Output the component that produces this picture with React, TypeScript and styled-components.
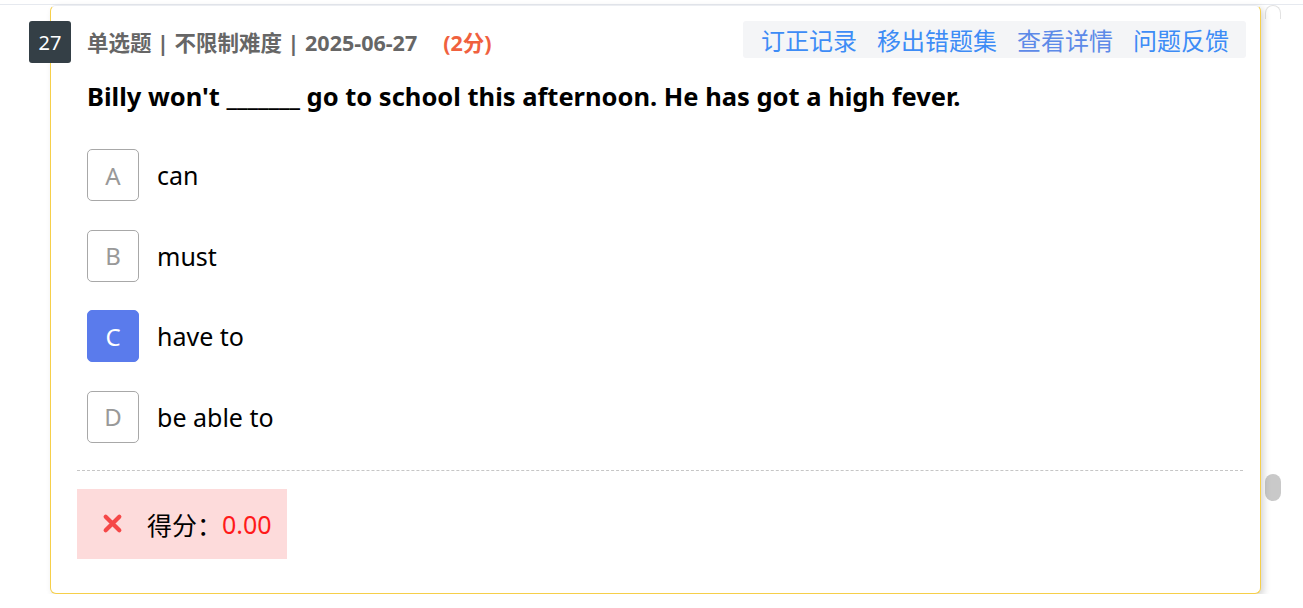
import styled, { createGlobalStyle } from "styled-components";

const GlobalStyle = createGlobalStyle`
  body {
    margin: 0;
    background: #fff;
    font-family: "Noto Sans", "Noto Sans CJK SC", sans-serif;
  }
`;

const TopEdge = styled.div`
  height: 4px;
  border-bottom: 1px solid #e6e9ef;
`;

const Page = styled.div`
  display: flex;
  flex-direction: row;
  align-items: flex-start;
  gap: 4px;
  padding-left: 50px;
`;

const Card = styled.div`
  position: relative;
  box-sizing: border-box;
  width: 1211px;
  height: 589px;
  border: 1px solid #f6cf4a;
  border-top-color: #eceef2;
  border-radius: 6px;
  box-shadow: 3px 3px 7px rgba(0, 0, 0, 0.16);
  background: #fff;
  padding-top: 15px;
`;

const Badge = styled.div`
  position: absolute;
  left: -22px;
  top: 15px;
  width: 42px;
  height: 42px;
  border-radius: 3px;
  background: #343f46;
  color: #fff;
  font-size: 20px;
  display: flex;
  align-items: center;
  justify-content: center;
`;

const Body = styled.div`
  padding: 0 14px 0 36px;
`;

const HeaderRow = styled.div`
  display: flex;
  align-items: center;
  justify-content: space-between;
  height: 37px;
`;

const Meta = styled.div`
  font-size: 21.5px;
  font-weight: 700;
  color: #666;
  white-space: pre;
  padding-top: 4px;
`;

const Score = styled.span`
  color: #f0613e;
  margin-left: 26px;
`;

const Links = styled.div`
  display: flex;
  gap: 20px;
  height: 37px;
  align-items: center;
  padding: 0 17px 0 18px;
  background: #f4f5f7;
  border-radius: 3px;
`;

const LinkItem = styled.span<{ $muted?: boolean }>`
  font-size: 24px;
  color: ${(p) => (p.$muted ? "#5d8ae8" : "#3d8cf6")};
  cursor: pointer;
`;

const Question = styled.div`
  margin-top: 21px;
  font-size: 25.5px;
  line-height: 34px;
  font-weight: 700;
  color: #000;
`;

const Options = styled.div`
  display: flex;
  flex-direction: column;
  gap: 28.5px;
  margin-top: 36px;
`;

const OptionRow = styled.div`
  display: flex;
  align-items: center;
  gap: 18px;
`;

const OptionKey = styled.div<{ $selected?: boolean }>`
  box-sizing: border-box;
  width: 52px;
  height: 52px;
  border-radius: 5px;
  border: 1px solid ${(p) => (p.$selected ? "#5a7bec" : "#a8a8a8")};
  background: ${(p) => (p.$selected ? "#5a7bec" : "#fff")};
  color: ${(p) => (p.$selected ? "#fff" : "#999")};
  font-size: 24px;
  display: flex;
  align-items: center;
  justify-content: center;
`;

const OptionText = styled.span`
  font-size: 25px;
  color: #000;
`;

const Footer = styled.div`
  padding: 0 17px 0 26px;
  margin-top: 27px;
`;

const Divider = styled.div`
  border-top: 1px dashed #c6c6c6;
`;

const Result = styled.div`
  margin-top: 18px;
  width: 210px;
  height: 70px;
  background: #fddbdb;
  display: flex;
  align-items: center;
  padding-left: 25px;
  box-sizing: border-box;
  font-size: 25px;
  color: #000;
`;

const Cross = styled.svg`
  width: 21px;
  height: 21px;
  margin-right: 24px;
`;

const Zero = styled.span`
  color: #ff1a1a;
`;

const Track = styled.div`
  width: 16px;
  height: 589px;
  display: flex;
  flex-direction: column;
  align-items: center;
`;

const TrackCap = styled.div`
  box-sizing: border-box;
  width: 16px;
  height: 14px;
  border: 1px solid #e2e2e2;
  border-bottom: none;
  border-radius: 8px 8px 0 0;
`;

const Thumb = styled.div`
  margin-top: 455px;
  width: 16px;
  height: 27px;
  border-radius: 8px;
  background: #c9c9c9;
`;

const options = [
  { key: "A", text: "can" },
  { key: "B", text: "must" },
  { key: "C", text: "have to", selected: true },
  { key: "D", text: "be able to" },
];

export default function App() {
  return (
    <>
      <GlobalStyle />
      <TopEdge />
      <Page>
        <Card>
          <Badge>27</Badge>
          <Body>
            <HeaderRow>
              <Meta>
                单选题 | 不限制难度 | 2025-06-27<Score>(2分)</Score>
              </Meta>
              <Links>
                <LinkItem>订正记录</LinkItem>
                <LinkItem>移出错题集</LinkItem>
                <LinkItem $muted>查看详情</LinkItem>
                <LinkItem>问题反馈</LinkItem>
              </Links>
            </HeaderRow>
            <Question>
              Billy won't _______ go to school this afternoon. He has got a high fever.
            </Question>
            <Options>
              {options.map((o) => (
                <OptionRow key={o.key}>
                  <OptionKey $selected={o.selected}>{o.key}</OptionKey>
                  <OptionText>{o.text}</OptionText>
                </OptionRow>
              ))}
            </Options>
          </Body>
          <Footer>
            <Divider />
            <Result>
              <Cross viewBox="0 0 20 20">
                <path
                  d="M3.5 3.5 L16.5 16.5 M16.5 3.5 L3.5 16.5"
                  stroke="#f54848"
                  strokeWidth="4"
                  strokeLinecap="round"
                />
              </Cross>
              得分：<Zero>0.00</Zero>
            </Result>
          </Footer>
        </Card>
        <Track>
          <TrackCap />
          <Thumb />
        </Track>
      </Page>
    </>
  );
}
